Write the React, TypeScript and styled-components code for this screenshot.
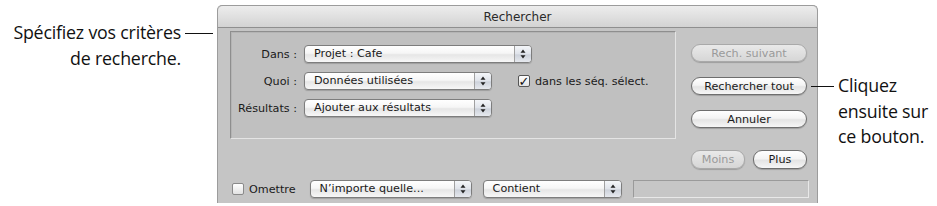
import styled, { createGlobalStyle } from 'styled-components';

const GlobalStyle = createGlobalStyle`
  html, body {
    margin: 0;
    padding: 0;
    background: #fff;
  }
`;

const Page = styled.div`
  display: flex;
  align-items: flex-start;
  width: 937px;
  height: 206px;
  padding-top: 5px;
  box-sizing: border-box;
  overflow: hidden;
`;

const Callout = styled.div<{ side: 'left' | 'right' }>`
  display: flex;
  align-items: flex-start;
  flex-direction: ${({ side }) => (side === 'left' ? 'row' : 'row-reverse')};
  justify-content: flex-end;
  width: ${({ side }) => (side === 'left' ? '217px' : '130px')};
  margin-left: ${({ side }) => (side === 'left' ? '0' : '-11px')};
  padding-top: ${({ side }) => (side === 'left' ? '15px' : '68px')};
  box-sizing: border-box;
  position: relative;
  z-index: 1;
`;

const CalloutText = styled.p<{ align: 'left' | 'right' }>`
  margin: 0;
  font-family: 'Open Sans', 'Lato', sans-serif;
  font-size: 17.8px;
  line-height: 25.5px;
  letter-spacing: -0.2px;
  color: #111;
  text-align: ${({ align }) => align};
  white-space: nowrap;
`;

const Leader = styled.span<{ width: number }>`
  flex: none;
  width: ${({ width }) => width}px;
  height: 1px;
  margin: 13px 4px 0;
  background: #111;
`;

const Window = styled.div`
  width: 601px;
  height: 198px;
  flex: none;
  display: flex;
  flex-direction: column;
  background: #c5c5c5;
  border: 1px solid #9c9c9c;
  border-bottom: none;
  border-radius: 5px 5px 0 0;
  box-sizing: border-box;
  font-family: 'DejaVu Sans', 'Liberation Sans', sans-serif;
  font-size: 11.2px;
  color: #1a1a1a;
`;

const TitleBar = styled.div`
  height: 21px;
  display: flex;
  align-items: center;
  justify-content: center;
  background: linear-gradient(#ededed, #d3d3d3);
  border-bottom: 1px solid #8f8f8f;
  border-radius: 5px 5px 0 0;
  font-size: 12px;
  color: #2a2a2a;
`;

const Body = styled.div`
  display: grid;
  grid-template-columns: 446px 116px;
  column-gap: 15px;
  padding: 3px 11px 0 12px;
`;

const GroupBox = styled.div`
  height: 108px;
  box-sizing: border-box;
  display: grid;
  grid-template-columns: 61px auto;
  grid-auto-rows: 18px;
  column-gap: 7px;
  row-gap: 9px;
  align-items: center;
  padding: 13px 0 0 5px;
  background: #c0c0c0;
  border: 1px solid #8e8e8e;
  border-right-color: #e4e4e4;
  border-bottom-color: #e4e4e4;
  box-shadow: inset 1px 1px 0 #b4b4b4;
`;

const Label = styled.span`
  text-align: right;
  white-space: nowrap;
`;

const Field = styled.div`
  display: flex;
  align-items: center;
  gap: 26px;
`;

const Popup = styled.div<{ width: number }>`
  width: ${({ width }) => width}px;
  height: 18px;
  flex: none;
  box-sizing: border-box;
  display: flex;
  align-items: stretch;
  border: 1px solid #7d7d7d;
  border-radius: 4px;
  background: linear-gradient(#ffffff 0%, #f6f6f6 45%, #e6e6e6 55%, #f7f7f7 100%);
  box-shadow: 0 1px 1px rgba(0, 0, 0, 0.18);
  overflow: hidden;
`;

const PopupText = styled.span`
  flex: 1;
  padding-left: 9px;
  line-height: 16px;
  white-space: nowrap;
`;

const PopupArrows = styled.span`
  width: 16px;
  display: flex;
  align-items: center;
  justify-content: center;
  border-left: 1px solid #a0a0a0;
  background: linear-gradient(#f4f6f9 0%, #dfe3ea 50%, #cdd2db 55%, #e6e9ee 100%);
`;

const Check = styled.span<{ checked?: boolean }>`
  width: 12px;
  height: 12px;
  flex: none;
  box-sizing: border-box;
  display: inline-flex;
  align-items: center;
  justify-content: center;
  border: 1px solid ${({ checked }) => (checked ? '#555' : '#8a8a8a')};
  border-radius: 2px;
  background: linear-gradient(#ffffff, #e2e2e2);
  font-size: 13px;
  line-height: 1;
  font-weight: bold;
  color: #111;
`;

const CheckLabel = styled.label`
  display: flex;
  align-items: center;
  gap: 5px;
  white-space: nowrap;
`;

const ButtonStack = styled.div`
  display: flex;
  flex-direction: column;
  gap: 15px;
  padding-top: 13px;
`;

const PillButton = styled.button<{ disabled?: boolean; width?: number }>`
  width: ${({ width }) => (width ? `${width}px` : '100%')};
  height: 18px;
  padding: 0;
  box-sizing: border-box;
  border-radius: 9px;
  border: 1px solid ${({ disabled }) => (disabled ? '#a9a9a9' : '#6e6e6e')};
  background: ${({ disabled }) =>
    disabled
      ? 'linear-gradient(#e9e9e9, #d6d6d6)'
      : 'linear-gradient(#ffffff 0%, #f4f4f4 45%, #e4e4e4 55%, #f6f6f6 100%)'};
  box-shadow: 0 1px 1px rgba(0, 0, 0, 0.2);
  font-family: inherit;
  font-size: 11.2px;
  color: ${({ disabled }) => (disabled ? '#9a9a9a' : '#1a1a1a')};
`;

const SmallButtons = styled.div`
  grid-column: 2;
  display: flex;
  justify-content: flex-end;
  gap: 8px;
  margin-top: 11px;

  ${PillButton} {
    height: 19px;
  }
`;

const BottomRow = styled.div`
  display: flex;
  align-items: center;
  gap: 11px;
  padding: 11px 0 0 14px;
`;

const Omit = styled(CheckLabel)`
  margin-right: 3px;
`;

const TextField = styled.div`
  width: 176px;
  height: 18px;
  box-sizing: border-box;
  background: #c6c6c6;
  border: 1px solid #9a9a9a;
  border-right-color: #e8e8e8;
  border-bottom-color: #e8e8e8;
`;

function Arrows() {
  return (
    <svg width="6" height="10" viewBox="0 0 6 10">
      <path d="M3 0.5 L5.5 3.8 H0.5 Z" fill="#222" />
      <path d="M3 9.5 L5.5 6.2 H0.5 Z" fill="#222" />
    </svg>
  );
}

function Select({ value, width }: { value: string; width: number }) {
  return (
    <Popup width={width}>
      <PopupText>{value}</PopupText>
      <PopupArrows>
        <Arrows />
      </PopupArrows>
    </Popup>
  );
}

export default function App() {
  return (
    <>
      <GlobalStyle />
      <Page>
        <Callout side="left">
          <CalloutText align="right">
            Spécifiez vos critères
            <br />
            de recherche.
          </CalloutText>
          <Leader width={28} />
        </Callout>

        <Window>
          <TitleBar>Rechercher</TitleBar>
          <Body>
            <GroupBox>
              <Label>Dans :</Label>
              <Field>
                <Select value="Projet : Cafe" width={228} />
              </Field>
              <Label>Quoi :</Label>
              <Field>
                <Select value="Données utilisées" width={188} />
                <CheckLabel>
                  <Check checked>✓</Check>
                  dans les séq. sélect.
                </CheckLabel>
              </Field>
              <Label>Résultats :</Label>
              <Field>
                <Select value="Ajouter aux résultats" width={188} />
              </Field>
            </GroupBox>

            <ButtonStack>
              <PillButton disabled>Rech. suivant</PillButton>
              <PillButton>Rechercher tout</PillButton>
              <PillButton>Annuler</PillButton>
            </ButtonStack>

            <SmallButtons>
              <PillButton disabled width={55}>
                Moins
              </PillButton>
              <PillButton width={55}>Plus</PillButton>
            </SmallButtons>
          </Body>

          <BottomRow>
            <Omit>
              <Check />
              Omettre
            </Omit>
            <Select value="N’importe quelle..." width={162} />
            <Select value="Contient" width={139} />
            <TextField />
          </BottomRow>
        </Window>

        <Callout side="right">
          <CalloutText align="left">
            Cliquez
            <br />
            ensuite sur
            <br />
            ce bouton.
          </CalloutText>
          <Leader width={23} />
        </Callout>
      </Page>
    </>
  );
}
